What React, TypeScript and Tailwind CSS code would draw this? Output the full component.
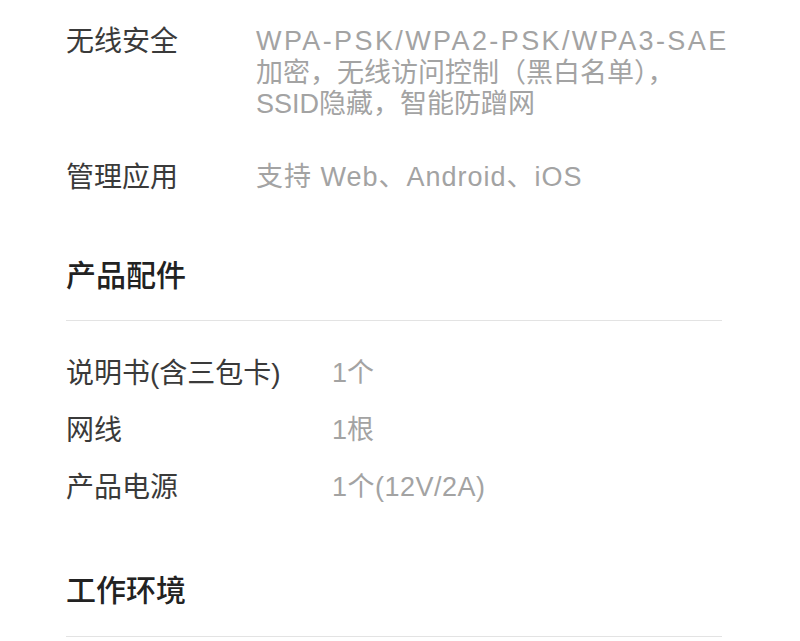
import React from "react";

const font = {
  fontFamily: '"Liberation Sans", "Noto Sans CJK SC", sans-serif',
};

function Row({
  label,
  children,
  labelW,
  className = "",
}: {
  label: string;
  children: React.ReactNode;
  labelW: string;
  className?: string;
}) {
  return (
    <div className={`flex items-start ${className}`}>
      <div className={`${labelW} shrink-0 whitespace-nowrap text-[28px] leading-[32px] text-[#3a3a3a]`}>{label}</div>
      <div className="whitespace-nowrap text-[27px] leading-[31.5px] text-[#a3a3a3]">{children}</div>
    </div>
  );
}

export default function App() {
  return (
    <div className="w-[800px] h-[641px] overflow-hidden bg-white" style={font}>
      <div className="px-[66px] pt-[26px] w-[788px]">
        <Row label="无线安全" labelW="w-[190px]">
          <div className="tracking-[2.4px]">WPA-PSK/WPA2-PSK/WPA3-SAE</div>
          <div>加密，无线访问控制（黑白名单），</div>
          <div>SSID隐藏，智能防蹭网</div>
        </Row>
        <Row label="管理应用" labelW="w-[190px]" className="mt-[41px]">
          <span className="tracking-[1px]">支持 Web、Android、iOS</span>
        </Row>

        <div className="mt-[64px] text-[30px] leading-[36px] font-medium text-[#222]">产品配件</div>
        <div className="mt-[26px] h-px bg-[#e3e3e3]" />

        <div className="mt-[37px] flex flex-col gap-[25px]">
          <Row label="说明书(含三包卡)" labelW="w-[266px]">1个</Row>
          <Row label="网线" labelW="w-[266px]">1根</Row>
          <Row label="产品电源" labelW="w-[266px]">
            <span className="tracking-[0.5px]">1个(12V/2A)</span>
          </Row>
        </div>

        <div className="mt-[69px] text-[30px] leading-[36px] font-medium text-[#222]">工作环境</div>
        <div className="mt-[27px] h-px bg-[#e3e3e3]" />
      </div>
    </div>
  );
}
